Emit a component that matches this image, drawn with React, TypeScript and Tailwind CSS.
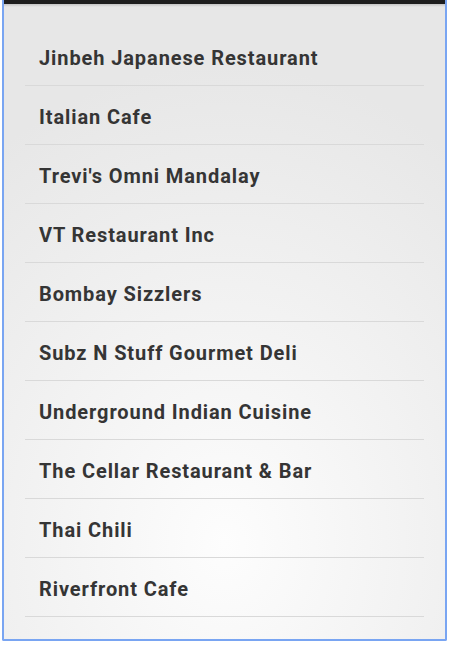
const restaurants = [
  "Jinbeh Japanese Restaurant",
  "Italian Cafe",
  "Trevi's Omni Mandalay",
  "VT Restaurant Inc",
  "Bombay Sizzlers",
  "Subz N Stuff Gourmet Deli",
  "Underground Indian Cuisine",
  "The Cellar Restaurant & Bar",
  "Thai Chili",
  "Riverfront Cafe",
];

export default function App() {
  return (
    <div className="w-[450px] h-[645px] bg-white pl-[2px] pr-[3px] pb-[4px]">
      <div className="h-full flex flex-col border-x-2 border-b-2 border-[#79a5f2] rounded-b-[2px] bg-[radial-gradient(ellipse_90%_75%_at_50%_85%,#fdfdfd_0%,#f3f3f3_45%,#e7e7e7_100%)] overflow-hidden">
        <div className="h-[4px] bg-[#1e1e1e] shrink-0" />
        <div className="h-[3px] bg-gradient-to-b from-[#c4c4c4] to-transparent shrink-0" />
        <ul className="mx-[21px] mt-[20px]">
          {restaurants.map((name) => (
            <li
              key={name}
              className="h-[59px] flex items-center pl-[14px] pt-[4px] border-b border-[#d9d9d9] text-[20px] tracking-[0.9px] font-bold text-[#353535] font-['Roboto',sans-serif]"
            >
              {name}
            </li>
          ))}
        </ul>
      </div>
    </div>
  );
}
